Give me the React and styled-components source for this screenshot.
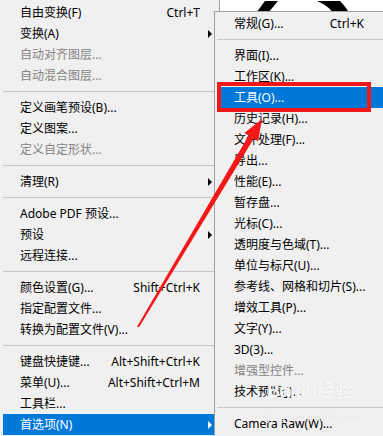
import React from "react";
import styled, { createGlobalStyle } from "styled-components";

const Global = createGlobalStyle`
  html, body { margin: 0; padding: 0; background: #fff; }
  * { box-sizing: border-box; }
`;

const FONT = `"Noto Sans", "Noto Sans CJK SC", sans-serif`;

const Screen = styled.div`
  position: relative;
  width: 383px;
  height: 436px;
  overflow: hidden;
  display: flex;
  background: #fff;
  font-family: ${FONT};
  font-size: 12px;
`;

const Menu = styled.div`
  width: 220px;
  height: 436px;
  flex: none;
  background: #f0f0f0;
  border-right: 1px solid #a7a7a7;
  padding: 2px 3px 0 3px;
  display: flex;
  flex-direction: column;
`;

const Canvas = styled.div`
  flex: 1;
  position: relative;
  background: #fff;
`;

const SubMenu = styled.div`
  position: absolute;
  left: 214px;
  top: 11px;
  width: 180px;
  height: 440px;
  background: #f0f0f0;
  border: 1px solid #a0a0a0;
  padding: 1px 2px;
  display: flex;
  flex-direction: column;
`;

const Item = styled.div`
  height: 21px;
  flex: none;
  display: grid;
  grid-template-columns: 1fr auto ${(p) => p.$tail}px;
  align-items: center;
  padding-left: 17px;
  line-height: 21px;
  white-space: nowrap;
  color: ${(p) => (p.$active ? "#fff" : p.$disabled ? "#838383" : "#000")};
  background: ${(p) => (p.$active ? "#0078d7" : "transparent")};
`;

const Shortcut = styled.span`
  text-align: right;
`;

const Arrow = styled.span`
  display: flex;
  justify-content: flex-start;
  padding-left: 8px;
  &::after {
    content: "";
    display: ${(p) => (p.$show ? "block" : "none")};
    width: 0;
    height: 0;
    border-top: 4px solid transparent;
    border-bottom: 4px solid transparent;
    border-left: 4px solid ${(p) => (p.$active ? "#fff" : "#000")};
  }
`;

const Sep = styled.div`
  height: 11px;
  flex: none;
  padding-top: 5px;
  &::before {
    content: "";
    display: block;
    height: 1px;
    background: #c6c6c6;
  }
`;

const Overlay = styled.svg`
  position: absolute;
  left: 0;
  top: 0;
  pointer-events: none;
`;

const Watermark = styled.div`
  position: absolute;
  left: 267px;
  top: 380px;
  display: flex;
  flex-direction: column;
  color: #f7f7f7;
  text-shadow: 0 0 1px rgba(0, 0, 0, 0.13);
  pointer-events: none;
`;

const WmBig = styled.span`
  font-family: "Liberation Sans", "Noto Sans CJK SC", sans-serif;
  font-size: 18px;
  font-weight: bold;
  line-height: 22px;
`;

const WmSmall = styled.span`
  font-family: "Liberation Sans", sans-serif;
  font-size: 11px;
  line-height: 13px;
  margin-top: 9px;
  letter-spacing: 0.3px;
`;

const leftItems = [
  { t: "自由变换(F)", k: "Ctrl+T" },
  { t: "变换(A)", sub: true },
  { t: "自动对齐图层...", d: true },
  { t: "自动混合图层...", d: true },
  { sep: true },
  { t: "定义画笔预设(B)..." },
  { t: "定义图案..." },
  { t: "定义自定形状...", d: true },
  { sep: true },
  { t: "清理(R)", sub: true },
  { sep: true },
  { t: "Adobe PDF 预设..." },
  { t: "预设", sub: true },
  { t: "远程连接..." },
  { sep: true },
  { t: "颜色设置(G)...", k: "Shift+Ctrl+K" },
  { t: "指定配置文件..." },
  { t: "转换为配置文件(V)..." },
  { sep: true },
  { t: "键盘快捷键...", k: "Alt+Shift+Ctrl+K" },
  { t: "菜单(U)...", k: "Alt+Shift+Ctrl+M" },
  { t: "工具栏..." },
  { t: "首选项(N)", sub: true, a: true },
];

const subItems = [
  { t: "常规(G)...", k: "Ctrl+K" },
  { sep: true },
  { t: "界面(I)..." },
  { t: "工作区(K)..." },
  { t: "工具(O)...", a: true },
  { t: "历史记录(H)..." },
  { t: "文件处理(F)..." },
  { t: "导出..." },
  { t: "性能(E)..." },
  { t: "暂存盘..." },
  { t: "光标(C)..." },
  { t: "透明度与色域(T)..." },
  { t: "单位与标尺(U)..." },
  { t: "参考线、网格和切片(S)..." },
  { t: "增效工具(P)..." },
  { t: "文字(Y)..." },
  { t: "3D(3)..." },
  { t: "增强型控件...", d: true },
  { t: "技术预览(J)..." },
  { sep: true },
  { t: "Camera Raw(W)..." },
];

function MenuList({ items, tail }) {
  return items.map((it, i) =>
    it.sep ? (
      <Sep key={i} />
    ) : (
      <Item key={i} $tail={tail} $active={it.a} $disabled={it.d}>
        <span>{it.t}</span>
        <Shortcut>{it.k || ""}</Shortcut>
        <Arrow $show={it.sub} $active={it.a} />
      </Item>
    )
  );
}

export default function App() {
  // red arrow geometry
  const tail = [138, 327];
  const tip = [262, 119];
  const dx = tip[0] - tail[0];
  const dy = tip[1] - tail[1];
  const len = Math.hypot(dx, dy);
  const u = [dx / len, dy / len];
  const n = [-u[1], u[0]];
  const headLen = 21;
  const headHalf = 8;
  const base = [tip[0] - headLen * u[0], tip[1] - headLen * u[1]];
  const pt = (p, k, w) => `${p[0] + n[0] * w * k},${p[1] + n[1] * w * k}`;
  const shaft = [pt(tail, 1, 1), pt(base, 1, 3), pt(base, -1, 3), pt(tail, -1, 1)].join(" ");
  const head = [`${tip[0]},${tip[1]}`, pt(base, 1, headHalf), pt(base, -1, headHalf)].join(" ");

  return (
    <>
      <Global />
      <Screen>
        <Menu>
          <MenuList items={leftItems} tail={16} />
        </Menu>
        <Canvas>
          <svg width="163" height="12" viewBox="0 0 163 12">
            <polygon points="45,0 58,0 48,12 36,12" fill="#000" />
            <path d="M97,0 L120,0 C124,4 127,8 129,12 L113,12 C110,7 104,3 97,0 Z" fill="#000" />
          </svg>
        </Canvas>
        <SubMenu>
          <MenuList items={subItems} tail={27} />
        </SubMenu>
        <Watermark>
          <WmBig>Baidu经验</WmBig>
          <WmSmall>jingyan.baidu.com</WmSmall>
        </Watermark>
        <Overlay width="383" height="436" viewBox="0 0 383 436">
          <rect x="219" y="84" width="150" height="26" fill="none" stroke="#f21818" strokeWidth="4" />
          <polygon points={shaft} fill="#f21818" />
          <polygon points={head} fill="#f21818" />
        </Overlay>
      </Screen>
    </>
  );
}
